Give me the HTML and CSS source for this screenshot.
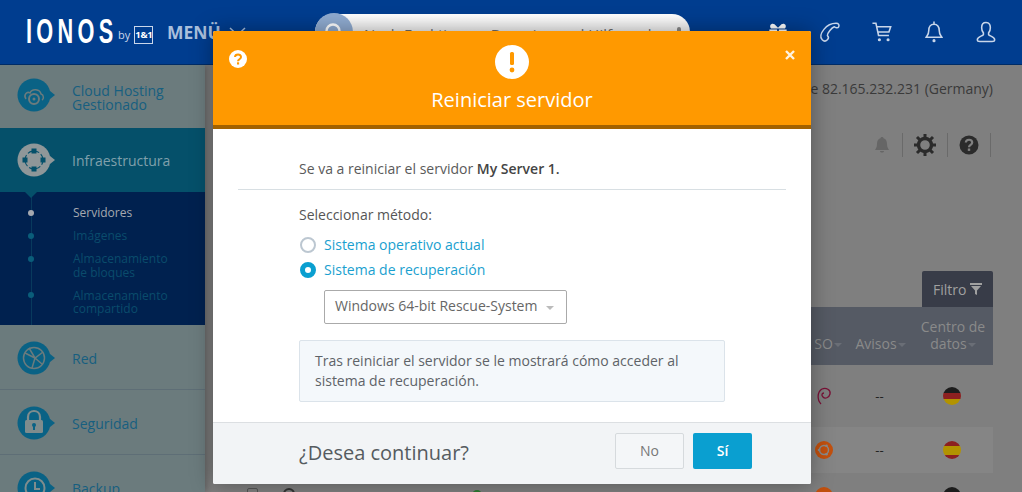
FILE: index.html
```html
<!DOCTYPE html>
<html lang="es">
<head>
<meta charset="utf-8">
<title>Reiniciar servidor</title>
<link rel="stylesheet" href="styles.css">
</head>
<body>
<header class="topbar">
  <div class="logo"><span class="logo-word">IONOS</span><span class="logo-by">by</span><span class="logo-box">1&amp;1</span></div>
  <div class="menu">MENÜ<svg class="menu-caret" width="17" height="9" viewBox="0 0 17 9"><path d="M1 1l7.500 7L16 1" fill="none" stroke="#a9bfdc" stroke-width="1.500"/></svg></div>
  <div class="search">
    <span class="search-btn"><svg width="24" height="24" viewBox="0 0 24 24"><circle cx="11" cy="11" r="6.500" fill="none" stroke="#fff" stroke-width="2.400"/></svg></span>
    <span class="search-text">Nach Funktionen, Domains und Hilfe suchen</span>
    <svg class="mic" width="8" height="20" viewBox="0 0 8 20"><rect x="2" y="1" width="4" height="14" rx="2" fill="#8a8a8a"/><rect y="12" width="8" height="6" fill="#a5a5a5"/></svg>
  </div>
  <nav class="top-icons">
    <svg width="26" height="26" viewBox="-2 -2 30 30"><path d="M5 9c-3-4 1-7 4-5l4 4 4-4c3-2 7 1 4 5zM3 10h9v4H3zM14 10h9v4h-9zM4 15h8v9H4zM14 15h8v9h-8z" fill="#fff"/></svg>
    <svg width="26" height="26" viewBox="-2 -2 30 30"><path d="M4 22c-3-3-2-7 2-12S15 3 20 3c3 0 4 2 3 4s-4 1-5 0c-3 1-8 7-8 10 1 1 2 3 0 5s-4 2-6 0z" fill="none" stroke="#c8d6ea" stroke-width="1.700"/></svg>
    <svg width="26" height="26" viewBox="-2 -2 30 30"><path d="M2 3h4l3 14h12M7 7h16l-2 6H8" fill="none" stroke="#c8d6ea" stroke-width="1.800"/><circle cx="10" cy="22" r="1.800" fill="#c8d6ea"/><circle cx="20" cy="22" r="1.800" fill="#c8d6ea"/></svg>
    <svg width="26" height="26" viewBox="-2 -2 30 30"><path d="M13 4c-4 0-6 3-6 7 0 5-2 6-3 8h18c-1-2-3-3-3-8 0-4-2-7-6-7zM13 1v3" fill="none" stroke="#c8d6ea" stroke-width="1.800"/><circle cx="13" cy="23" r="1.800" fill="#c8d6ea"/></svg>
    <svg width="26" height="26" viewBox="-2 -2 30 30"><path d="M13 2c-4 0-5 3-5 6s1 5 2 6v2c-1 2-7 2-7 6 0 2 1 2 3 2h14c2 0 3 0 3-2 0-4-6-4-7-6v-2c1-1 2-3 2-6s-1-6-5-6z" fill="none" stroke="#c8d6ea" stroke-width="1.800"/></svg>
  </nav>
</header>

<div class="page">
  <aside class="sidebar">
    <a class="side-item first">
      <svg class="side-icon" width="40" height="36" viewBox="0 0 40 36"><circle cx="17" cy="18" r="16.500" fill="#0a6285"/><path d="M33 14l5 4-5 4z" fill="#0a6285"/><path d="M9 22c-3-4 1-8 4-6 2-5 10-4 11 1 3 1 3 5 1 6" fill="none" stroke="#6b7b7d" stroke-width="1.500"/><circle cx="17" cy="22" r="5" fill="none" stroke="#6b7b7d" stroke-width="2"/><circle cx="17" cy="22" r="1.500" fill="#6b7b7d"/></svg>
      <span>Cloud Hosting<br>Gestionado</span>
    </a>
    <a class="side-item active">
      <svg class="side-icon" width="40" height="36" viewBox="0 0 40 36"><circle cx="17" cy="18" r="16.500" fill="#8f9799"/><path d="M33 14l5 4-5 4z" fill="#8f9799"/><circle cx="17" cy="18" r="9" fill="none" stroke="#05506a" stroke-width="1.100" stroke-dasharray="5 2.100"/><rect x="14.500" y="6.500" width="5" height="5" fill="#05506a"/><rect x="14.500" y="24.500" width="5" height="5" fill="#05506a"/><rect x="5.500" y="15.500" width="5" height="5" fill="#05506a"/><rect x="23.500" y="15.500" width="5" height="5" fill="#05506a"/></svg>
      <span>Infraestructura</span>
    </a>
    <ul class="sub">
      <li class="current">Servidores</li>
      <li>Imágenes</li>
      <li>Almacenamiento<br>de bloques</li>
      <li>Almacenamiento<br>compartido</li>
    </ul>
    <a class="side-item">
      <svg class="side-icon" width="40" height="36" viewBox="0 0 40 36"><circle cx="17" cy="18" r="16.500" fill="#0a6285"/><path d="M33 14l5 4-5 4z" fill="#0a6285"/><circle cx="17" cy="18" r="10.500" fill="none" stroke="#6b7b7d" stroke-width="1.500"/><path d="M8 13l10 5 8-6M18 18l-3 10M12 8l6 10 7 6" fill="none" stroke="#6b7b7d" stroke-width="1.500"/></svg>
      <span>Red</span>
    </a>
    <a class="side-item">
      <svg class="side-icon" width="40" height="36" viewBox="0 0 40 36"><circle cx="17" cy="18" r="16.500" fill="#0a6285"/><path d="M33 14l5 4-5 4z" fill="#0a6285"/><path d="M11 15v-3c0-8 12-8 12 0v3" fill="none" stroke="#7f8c8d" stroke-width="2.200"/><rect x="8" y="15" width="18" height="13" rx="1.500" fill="#7f8c8d"/><circle cx="17" cy="20" r="2" fill="#0a6285"/><rect x="16" y="20" width="2" height="5" fill="#0a6285"/></svg>
      <span>Seguridad</span>
    </a>
    <a class="side-item last">
      <svg class="side-icon" width="40" height="36" viewBox="0 0 40 36"><circle cx="17" cy="18" r="16.500" fill="#0a6285"/><path d="M33 14l5 4-5 4z" fill="#0a6285"/><circle cx="18" cy="18" r="9.500" fill="none" stroke="#7f8c8d" stroke-width="2"/><path d="M18 12v7h5" fill="none" stroke="#7f8c8d" stroke-width="2"/></svg>
      <span>Backup</span>
    </a>
  </aside>

  <main class="content">
    <p class="ip">Está conectado desde 82.165.232.231 (Germany)</p>
    <div class="tools">
      <svg class="tool" width="18" height="18" viewBox="0 0 18 18"><path d="M9 1c-1 0-1.500.6-1.500 1.300C5 3 4 5 4 8c0 3-1 4.500-2 6h14c-1-1.500-2-3-2-6 0-3-1-5-3.500-5.700C10.500 1.600 10 1 9 1zM7 15c0 2 4 2 4 0z" fill="#666"/></svg>
      <span class="tool-sep"></span>
      <svg class="tool" width="22" height="22" viewBox="0 0 22 22"><circle cx="11" cy="11" r="6.500" fill="none" stroke="#2b2b2b" stroke-width="3.400"/><path d="M11 0v5M11 17v5M0 11h5M17 11h5M3 3l3.500 3.500M15.500 15.500L19 19M19 3l-3.500 3.500M6.500 15.500L3 19" stroke="#2b2b2b" stroke-width="3"/></svg>
      <span class="tool-sep"></span>
      <svg class="tool" width="20" height="20" viewBox="0 0 20 20"><circle cx="10" cy="10" r="9.500" fill="#2b2b2b"/><path d="M6.800 7.500C7 3.800 13.200 3.800 13.200 7.500c0 2.400-3.200 2.400-3.200 4.800" fill="none" stroke="#808080" stroke-width="2.200"/><rect x="8.800" y="13.500" width="2.400" height="2.400" fill="#808080"/></svg>
      <span class="tool-sep"></span>
    </div>
    <div class="filter-row"><button class="filter">Filtro <svg width="12" height="12" viewBox="0 0 12 12"><path d="M0 0h12v2H0zM1 3h10L7 7.500V12L5 11V7.500z" fill="#a0a0a0"/></svg></button></div>
    <div class="thead">
      <span class="th th-so">SO<i class="caret"></i></span>
      <span class="th th-av">Avisos<i class="caret"></i></span>
      <span class="th th-dc">Centro de<br>datos<i class="caret"></i></span>
    </div>
    <div class="row row-a">
      <span class="cell-so"><svg width="16" height="20" viewBox="0 0 16 20"><path d="M5 18C1 14 1 6 6 3c4-2 9 1 8 5s-5 5-7 3-1-4 1-4" fill="none" stroke="#7a1036" stroke-width="1.300"/></svg></span>
      <span class="cell-av">--</span>
      <span class="cell-dc"><span class="flag flag-de"></span></span>
    </div>
    <div class="row row-b">
      <span class="cell-so"><svg width="18" height="18" viewBox="0 0 18 18"><circle cx="9" cy="9" r="9" fill="#c2500e"/><circle cx="9" cy="9" r="4.500" fill="none" stroke="#8a8a8a" stroke-width="1.500"/><circle cx="4" cy="9" r="1.300" fill="#8a8a8a"/><circle cx="11.500" cy="4.700" r="1.300" fill="#8a8a8a"/><circle cx="11.500" cy="13.300" r="1.300" fill="#8a8a8a"/></svg></span>
      <span class="cell-av">--</span>
      <span class="cell-dc"><span class="flag flag-es"></span></span>
    </div>
    <div class="row row-c">
      <span class="cell-main"><i class="check"></i><i class="ring"></i><i class="status"></i></span>
      <span class="cell-so"><svg width="18" height="18" viewBox="0 0 18 18"><circle cx="9" cy="9" r="9" fill="#c2500e"/></svg></span>
      <span class="cell-av"></span>
      <span class="cell-dc"><span class="flag flag-de"></span></span>
    </div>
  </main>
</div>

<section class="modal">
  <div class="modal-head">
    <svg class="help" width="18" height="18" viewBox="0 0 18 18"><circle cx="9" cy="9" r="9" fill="#fff"/><path d="M6 7c.2-3.400 6-3.400 6 0 0 2.200-3 2.200-3 4.200" fill="none" stroke="#f90" stroke-width="2"/><rect x="8" y="12.300" width="2.100" height="2.200" fill="#f90"/></svg>
    <svg class="close" width="10" height="10" viewBox="0 0 10 10"><path d="M1 1l8 8M9 1l-8 8" stroke="#fff3df" stroke-width="2.400"/></svg>
    <svg class="warn" width="34" height="34" viewBox="0 0 34 34"><circle cx="17" cy="17" r="17" fill="#fff"/><rect x="15" y="7" width="4" height="13" rx="1.500" fill="#f90"/><circle cx="17" cy="25" r="2.400" fill="#f90"/></svg>
    <h1>Reiniciar servidor</h1>
  </div>
  <div class="modal-body">
    <p class="lead">Se va a reiniciar el servidor <b>My Server 1.</b></p>
    <hr class="divider">
    <div class="form">
      <p class="form-label">Seleccionar método:</p>
      <label class="radio"><i class="dot"></i>Sistema operativo actual</label>
      <label class="radio"><i class="dot on"></i>Sistema de recuperación</label>
      <div class="select">Windows 64-bit Rescue-System<i class="select-caret"></i></div>
      <div class="info">Tras reiniciar el servidor se le mostrará cómo acceder al sistema de recuperación.</div>
    </div>
  </div>
  <div class="modal-foot">
    <span class="ask">¿Desea continuar?</span>
    <button class="btn btn-no">No</button>
    <button class="btn btn-yes">Sí</button>
  </div>
</section>
</body>
</html>
```
FILE: styles.css
```css
* { box-sizing: border-box; }
html, body { margin: 0; height: 492px; overflow: hidden; }
body { font-family: "Open Sans", sans-serif; background: #7f7f7f; position: relative; width: 1022px; }

.topbar { height: 65px; background: #003d8f; border-bottom: 1px solid #002c66; display: flex; align-items: flex-start; position: relative; }
.logo { display: flex; align-items: flex-start; margin: 14px 0 0 26px; width: 141px; color: #fff; }
.logo-word { display: block; width: 92px; flex: none; white-space: nowrap; font-family: "Liberation Sans", sans-serif; font-weight: 700; font-size: 35px; line-height: 34px; letter-spacing: 7px; transform: scaleX(.62); transform-origin: left; }
.logo-by { font-size: 11px; line-height: 14px; margin: 14px 4px 0 0; color: #c9d6ea; }
.logo-box { width: 19px; height: 18px; flex: none; font-size: 9.500px; font-weight: 700; border: 1px solid #c9d6ea; line-height: 16px; margin-top: 12px; text-align: center; letter-spacing: -.3px; }
.menu { color: #a9bfdc; font-weight: 700; font-size: 17.500px; line-height: 24px; margin-top: 20px; width: 148px; white-space: nowrap; display: flex; align-items: flex-start; }
.menu-caret { margin: 7px 0 0 8px; }
.search { width: 375px; height: 36px; margin-top: 14px; border-radius: 18px; background: linear-gradient(#fff, #ddd); display: flex; align-items: center; }
.search-btn { width: 38px; height: 38px; border-radius: 50%; background: #8fabd0; display: flex; align-items: center; justify-content: center; flex: none; }
.search-text { font-size: 15px; color: #6d6d6d; margin-left: 11px; white-space: nowrap; flex: 1; padding-top: 3px; }
.mic { margin-right: 14px; margin-top: 8px; flex: none; }
.top-icons { margin-left: 75px; display: flex; gap: 26px; padding-top: 19px; }

.page { display: flex; height: 427px; }
.sidebar { width: 205px; flex: none; background: #6b7b7d; box-shadow: 2px 0 6px rgba(0,0,0,.25); color: #175f80; font-size: 14px; line-height: 14px; overflow: hidden; }
.side-item { display: flex; align-items: center; height: 65px; padding: 2px 0 0 17px; gap: 15px; border-bottom: 1px solid #5e6e76; }
.side-item span { padding-top: 2px; }
.side-item.first { height: 63px; border: 0; padding-top: 0; padding-bottom: 3px; }
.side-item.first span { padding-top: 5px; }
.side-item.active { height: 64px; padding-top: 0; background: #05506a; color: #80a0ac; border: 0; position: relative; }
.side-item.active::after { content: ""; position: absolute; left: 25px; top: 100%; border: 6px solid transparent; border-top-color: #05506a; border-bottom: 0; z-index: 1; }
.side-icon { flex: none; }
.sub { margin: 0; padding: 14px 0 0 73px; list-style: none; background: #00214f; height: 133px; color: #0a4c6c; font-size: 12px; line-height: 13.500px; position: relative; }
.sub::before { content: ""; position: absolute; left: 31px; top: 0; bottom: 0; width: 1px; background: #083a5d; }
.sub li { margin-bottom: 9.500px; position: relative; }
.sub li::before { content: ""; position: absolute; left: -45px; top: 3.500px; width: 6px; height: 6px; border-radius: 50%; background: #0a5d7a; }
.sub li.current { color: #a5a9b0; }
.sub li.current::before { background: #a5a9b0; }

.content { flex: 1; padding: 0 29px 0 28px; min-width: 0; display: flex; flex-direction: column; }
.ip { margin: 15px 0 0; text-align: right; font-size: 14px; line-height: 18px; color: #3a3a3a; white-space: nowrap; }
.tools { display: flex; justify-content: flex-end; align-items: center; gap: 11px; height: 26px; margin-top: 34px; padding-right: 2px; }
.tool-sep { width: 1px; height: 24px; background: #6a6a6a; }
.filter-row { display: flex; justify-content: flex-end; margin-top: 113px; }
.filter { width: 71px; height: 36px; border: 0; border-radius: 2px 2px 0 0; background: #383c48; color: #a0a0a0; font: 14px "Open Sans", sans-serif; }
.thead { height: 58px; background: #555a64; display: flex; align-items: flex-end; justify-content: flex-end; color: #8a8a8a; font-size: 14px; line-height: 17px; padding: 0 4px 13px 0; flex: none; }
.th { text-align: center; position: relative; }
.th-so { width: 40px; }
.th-av { width: 65px; margin-right: 4px; }
.th-dc { width: 72px; }
.caret { display: inline-block; border: 4px solid transparent; border-top-color: #6a6e76; border-bottom: 0; margin-left: 1px; vertical-align: middle; }
.row { display: flex; justify-content: flex-end; align-items: center; padding-right: 3px; flex: none; }
.row-a { height: 58px; padding-top: 4px; }
.row-b { height: 46px; margin-top: 4px; background: #858585; }
.row-c { height: 14px; margin-top: 5px; align-items: flex-start; padding-top: 9px; }
.cell-main { flex: 1; display: flex; padding: 1px 0 0 14px; }
.check { width: 11px; height: 11px; flex: none; border: 1px solid #555; border-radius: 2px; }
.ring { width: 12px; height: 12px; flex: none; margin-left: 25px; border: 2px solid #333; border-radius: 50%; }
.status { width: 10px; height: 10px; flex: none; margin: 2px 0 0 177px; border-radius: 50%; background: #2c7a32; }
.cell-so { width: 40px; padding-right: 6px; }
.cell-so svg { display: block; margin: 0 auto; }
.cell-av { width: 65px; margin-right: 6px; text-align: center; font-size: 13px; color: #222; }
.cell-dc { width: 72px; display: flex; justify-content: center; padding-right: 4px; }
.flag { width: 18px; height: 18px; border-radius: 50%; display: block; flex: none; }
.flag-de { background: linear-gradient(#1c1c1c 33%, #8c2020 33%, #8c2020 66%, #b29300 66%); }
.flag-es { background: linear-gradient(#8c2020 25%, #b29300 25%, #b29300 75%, #8c2020 75%); }

.modal { position: absolute; left: 213px; top: 31px; width: 598px; height: 453px; background: #fff; border-radius: 2px; box-shadow: 0 0 22px rgba(0,0,0,.35); display: flex; flex-direction: column; overflow: hidden; }
.modal-head { height: 98px; background: #f90; border-bottom: 4px solid #a36200; position: relative; display: flex; flex-direction: column; align-items: center; flex: none; }
.help { position: absolute; left: 16px; top: 19px; }
.close { position: absolute; right: 16px; top: 19px; }
.warn { margin-top: 14px; }
.modal-head h1 { margin: 8px 0 0; font-size: 20px; line-height: 26px; font-weight: 400; color: #fff; }
.modal-body { flex: 1; padding: 31px 25px 0; color: #555; font-size: 14px; line-height: 18px; }
.lead { margin: 0; padding-left: 61px; color: #5a5a5a; }
.lead b { color: #444; font-weight: 600; }
.divider { border: 0; border-top: 1px solid #d8dfe3; margin: 11px 0 0; }
.form { padding-left: 61px; }
.form-label { margin: 16px 0 0; }
.radio { display: flex; align-items: center; color: #1a9fcf; height: 25px; gap: 9px; }
.form-label + .radio { margin-top: 8px; }
.dot { width: 16px; height: 16px; border-radius: 50%; border: 2px solid #bcc7d1; flex: none; margin-left: 1px; margin-right: -1px; }
.dot.on { border: 5px solid #0a9fd0; }
.select { width: 243px; height: 34px; margin: 8px 0 0 25px; border: 1px solid #aaa; border-radius: 2px; padding: 0 0 3px 10px; display: flex; align-items: center; color: #666; position: relative; }
.select-caret { position: absolute; right: 12px; top: 15px; border: 4px solid transparent; border-top-color: #bbb; border-bottom: 0; }
.info { width: 426px; height: 62px; margin-top: 16px; padding: 10px 15px; background: #f4f8fb; border: 1px solid #dbe3ea; border-radius: 2px; line-height: 20px; color: #5e6368; }
.modal-foot { height: 62px; flex: none; background: #f2f4f6; border-top: 1px solid #dcdfe2; display: flex; align-items: center; padding: 0 59px 6px 86px; }
.ask { font-size: 20px; color: #555b60; flex: 1; padding-top: 3px; }
.btn { height: 36px; font: 14px "Open Sans", sans-serif; border-radius: 2px; }
.btn-no { width: 69px; background: #f4f6f8; border: 1px solid #d6dadd; color: #777; margin-right: 9px; }
.btn-yes { width: 59px; background: #0a9fd0; border: 0; color: #fff; font-weight: 600; }
```
